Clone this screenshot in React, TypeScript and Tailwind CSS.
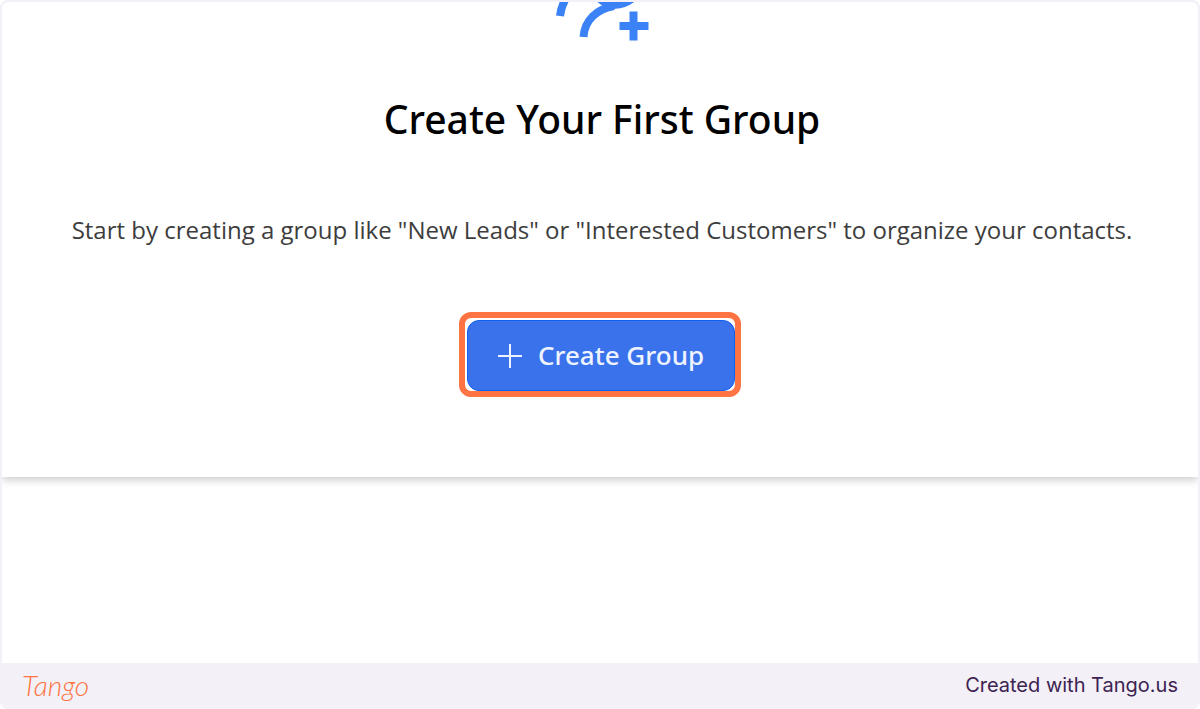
const GroupIcon = () => (
  <svg viewBox="0 0 96 40" className="block h-10 w-24" fill="none" stroke="#3b82f6" strokeWidth="8" aria-hidden="true">
    <path d="M6 14 Q7 5 12 -4" />
    <path d="M29.500 35 C30.500 18 43 7 60 4" />
    <path d="M46 -3 C55 5 67 5 79 -4" />
    <path d="M79.500 9.500 V38.500 M65.500 24 H94.500" />
  </svg>
);

const PlusIcon = () => (
  <svg viewBox="0 0 24 24" className="size-6" fill="none" stroke="currentColor" strokeWidth="2" aria-hidden="true">
    <path d="M12 0 V24 M0 12 H24" />
  </svg>
);

const EmptyState = () => (
  <section className="flex flex-col items-center pr-3 pb-20 pl-4 shadow-[0_3px_8px_0_rgba(0,0,0,0.2)]">
    <GroupIcon />
    <h1 className="mt-12 text-center font-['Noto_Sans','Open_Sans',sans-serif] text-[39px] leading-[58px] font-medium text-black">
      Create Your First Group
    </h1>
    <p className="mt-16 text-center font-['Open_Sans','Noto_Sans',sans-serif] text-2xl leading-9 text-[#3d3d3d]">
      Start by creating a group like "New Leads" or "Interested Customers" to organize your contacts.
    </p>
    <div className="mt-16 mr-1 rounded-xl border-[6px] border-[#ff7442] pt-0.5 pl-0.5">
      <button
        type="button"
        className="flex h-[71px] items-center gap-4 rounded-xl border border-[#0f5ff0] bg-[#3a72ec] px-[30px] font-['Noto_Sans','Open_Sans',sans-serif] text-[26px] font-medium text-[#eef3ff]"
      >
        <PlusIcon />
        Create Group
      </button>
    </div>
  </section>
);

const Footer = () => (
  <footer className="flex h-11 items-center justify-between bg-[#f3f0f7] px-5 text-xl">
    <a href="#" className="font-['Lato',sans-serif] text-[28px] leading-8 font-light text-[#ff7442] italic">
      Tango
    </a>
    <span className="font-['Inter',sans-serif] text-[#3d2352]">Created with Tango.us</span>
  </footer>
);

export default function App() {
  return (
    <div className="flex min-h-screen flex-col overflow-hidden rounded-lg border-2 border-[#f3f0f7] bg-white">
      <main className="flex-1">
        <EmptyState />
      </main>
      <Footer />
    </div>
  );
}
